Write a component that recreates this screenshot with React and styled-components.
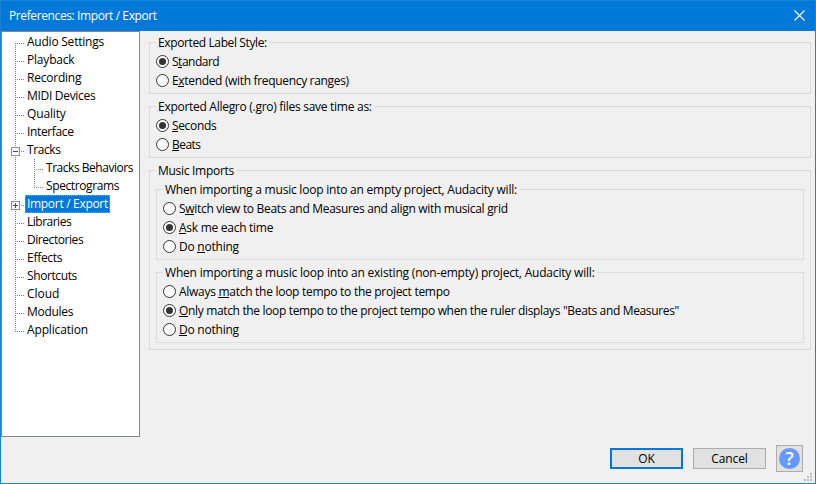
import React from 'react';
import styled, { createGlobalStyle } from 'styled-components';

const GlobalStyle = createGlobalStyle`
  *, *::before, *::after { box-sizing: border-box; }
  body { margin: 0; overflow: hidden; }
`;

const Dialog = styled.div`
  display: flex;
  flex-direction: column;
  width: 816px;
  height: 484px;
  border: 1px solid #1883d7;
  background: #f0f0f0;
  color: #000;
  font: 12px/18px 'Open Sans', 'Noto Sans', sans-serif;
  user-select: none;
`;

const TitleBar = styled.header`
  display: flex;
  align-items: center;
  justify-content: space-between;
  flex: none;
  height: 30px;
  padding: 0 10px 0 8px;
  background: #0078d7;
  color: #fff;
`;

const CloseIcon = styled.svg`
  width: 11px;
  height: 11px;
  margin-bottom: 1px;
`;

const Text = styled.span`
  white-space: nowrap;
  letter-spacing: ${(p) => p.$track || 0}px;
`;

const Body = styled.main`
  display: flex;
  flex: none;
  height: 406px;
`;

const Tree = styled.ul`
  flex: none;
  width: 139px;
  margin: 0;
  padding: 1px 0 0 9px;
  border: 1px solid #828790;
  background: #fff;
  list-style: none;
`;

const TreeRow = styled.li`
  display: flex;
  align-items: center;
  height: 18px;
`;

const Connector = styled.svg`
  flex: none;
  width: ${(p) => p.width}px;
  height: 18px;
  shape-rendering: crispEdges;
`;

const TreeLabel = styled.span`
  display: flex;
  align-items: center;
  height: 18px;
  padding: 0 2px;
  ${(p) => p.$selected && `
    padding: 0 1px;
    border: 1px dotted #ff8728;
    background: #0078d7;
    color: #fff;
  `}
`;

const Panel = styled.section`
  display: flex;
  flex-direction: column;
  flex: 1;
  padding: 4px 4px 0 9px;
`;

const Group = styled.section`
  display: flex;
  flex-direction: column;
  height: ${(p) => p.$height}px;
  margin-bottom: ${(p) => p.$gap || 0}px;
`;

const GroupHead = styled.div`
  display: flex;
  align-items: flex-start;
  flex: none;
  height: 16px;

  &::before,
  &::after {
    content: '';
    height: 9px;
    margin-top: 7px;
    border: 0 solid #dcdcdc;
    border-top-width: 1px;
  }
  &::before { width: 7px; border-left-width: 1px; }
  &::after { flex: 1; border-right-width: 1px; }
`;

const GroupTitle = styled.h2`
  margin: 0;
  padding: 0 2px;
  font: inherit;
  line-height: 16px;
`;

const GroupBody = styled.div`
  flex: 1;
  padding: ${(p) => (p.$nested ? '3px 6px 0' : '1px 6px 0')};
  border: 1px solid #dcdcdc;
  border-top: 0;
`;

const Option = styled.label`
  display: flex;
  align-items: center;
  gap: 3px;
  height: 19px;
  line-height: 19px;
`;

const RadioMark = styled.svg`
  flex: none;
  width: 13px;
  height: 13px;
`;

const Key = styled.span`
  display: inline-block;
  height: 13px;
  line-height: 14px;
  box-shadow: inset 0 -1px 0 #000;
`;

const Footer = styled.footer`
  display: flex;
  position: relative;
  flex: 1;
  align-items: flex-start;
  justify-content: flex-end;
  gap: 10px;
  padding: 8px 12px 0 0;
`;

const PushButton = styled.button`
  display: flex;
  align-items: center;
  justify-content: center;
  width: 73px;
  height: 21px;
  margin-top: 3px;
  padding: 1px 0 0;
  border: ${(p) => (p.$primary ? '2px solid #0078d7' : '1px solid #adadad')};
  background: #e1e1e1;
  color: #000;
  font: inherit;
`;

const HelpButton = styled(PushButton)`
  width: 27px;
  height: 27px;
  margin-top: 0;
  padding: 0;
`;

const HelpDisc = styled.span`
  display: flex;
  align-items: center;
  justify-content: center;
  width: 21px;
  height: 21px;
  border-radius: 50%;
  background: #69f;
  color: #fff;
  font: 600 18px/21px 'Open Sans', sans-serif;
`;

const SizeGrip = styled.svg`
  position: absolute;
  right: 3px;
  bottom: 2px;
  width: 8px;
  height: 8px;
  shape-rendering: crispEdges;
`;

const TREE = [
  { text: 'Audio Settings', track: -0.23, first: true },
  { text: 'Playback', track: -0.2 },
  { text: 'Recording', track: -0.22 },
  { text: 'MIDI Devices', track: -0.3 },
  { text: 'Quality', track: -0.15 },
  { text: 'Interface', track: -0.36 },
  { text: 'Tracks', track: -0.4, box: 'minus' },
  { text: 'Tracks Behaviors', track: -0.47, child: true },
  { text: 'Spectrograms', track: -0.39, child: true, lastChild: true },
  { text: 'Import / Export', track: -0.31, box: 'plus', selected: true },
  { text: 'Libraries', track: -0.5 },
  { text: 'Directories', track: -0.44 },
  { text: 'Effects', track: -0.28 },
  { text: 'Shortcuts', track: -0.4 },
  { text: 'Cloud', track: -0.05 },
  { text: 'Modules', track: -0.3 },
  { text: 'Application', track: -0.15, last: true },
];

function TreeLines({ item }) {
  const dots = { stroke: '#808080', strokeDasharray: '1 1' };
  const start = item.first ? 10 : 0;
  const end = item.last ? 11 : 18;
  return (
    <Connector width={item.child ? 33 : 14} viewBox={`0 0 ${item.child ? 33 : 14} 18`}>
      <path d={`M4.5 ${start}V${end}`} {...dots} />
      {item.child ? (
        <>
          <path d={`M23.5 0V${item.lastChild ? 11 : 18}`} {...dots} />
          <path d="M23 10.5H32" {...dots} />
        </>
      ) : (
        <path d="M4 10.5H13" {...dots} />
      )}
      {item.box && (
        <>
          <rect x="0.5" y="6.5" width="8" height="8" fill="#fafafa" stroke="#919191" />
          <path d="M2 10.5H7" stroke="#3b4f81" />
          {item.box === 'plus' && <path d="M4.5 8V13" stroke="#3b4f81" />}
        </>
      )}
    </Connector>
  );
}

function Radio({ text, hot = 0, track, checked }) {
  return (
    <Option>
      <RadioMark viewBox="0 0 13 13">
        <circle cx="6.5" cy="6.5" r="6" fill="#fff" stroke="#333" />
        {checked && <circle cx="6.5" cy="6.5" r="3.5" fill="#333" />}
      </RadioMark>
      <Text $track={track}>
        {text.slice(0, hot)}
        <Key>{text[hot]}</Key>
        {text.slice(hot + 1)}
      </Text>
    </Option>
  );
}

function GroupBox({ title, track, height, gap, nested, children }) {
  return (
    <Group $height={height} $gap={gap}>
      <GroupHead>
        <GroupTitle><Text $track={track}>{title}</Text></GroupTitle>
      </GroupHead>
      <GroupBody $nested={nested}>{children}</GroupBody>
    </Group>
  );
}

export default function App() {
  return (
    <>
      <GlobalStyle />
      <Dialog>
        <TitleBar>
          <Text $track={-0.39}>Preferences: Import / Export</Text>
          <CloseIcon viewBox="0 0 11 11">
            <path d="M.5 .5L10.5 10.5M10.5 .5L.5 10.5" stroke="#fff" strokeWidth="1.1" />
          </CloseIcon>
        </TitleBar>
        <Body>
          <Tree>
            {TREE.map((item) => (
              <TreeRow key={item.text}>
                <TreeLines item={item} />
                <TreeLabel $selected={item.selected}>
                  <Text $track={item.track}>{item.text}</Text>
                </TreeLabel>
              </TreeRow>
            ))}
          </Tree>
          <Panel>
            <GroupBox title="Exported Label Style:" track={-0.38} height={59} gap={5}>
              <Radio text="Standard" hot={1} track={-0.5} checked />
              <Radio text="Extended (with frequency ranges)" hot={1} track={-0.33} />
            </GroupBox>
            <GroupBox title="Exported Allegro (.gro) files save time as:" track={-0.28} height={59} gap={5}>
              <Radio text="Seconds" track={-0.35} checked />
              <Radio text="Beats" track={-0.55} />
            </GroupBox>
            <GroupBox title="Music Imports" track={-0.29} height={187} nested>
              <GroupBox
                title="When importing a music loop into an empty project, Audacity will:"
                track={-0.22}
                height={78}
                gap={5}
              >
                <Radio text="Switch view to Beats and Measures and align with musical grid" hot={1} track={-0.31} />
                <Radio text="Ask me each time" track={-0.27} checked />
                <Radio text="Do nothing" hot={3} track={-0.23} />
              </GroupBox>
              <GroupBox
                title="When importing a music loop into an existing (non-empty) project, Audacity will:"
                track={-0.195}
                height={78}
              >
                <Radio text="Always match the loop tempo to the project tempo" hot={7} track={-0.28} />
                <Radio
                  text={'Only match the loop tempo to the project tempo when the ruler displays "Beats and Measures"'}
                  track={-0.34}
                  checked
                />
                <Radio text="Do nothing" track={-0.23} />
              </GroupBox>
            </GroupBox>
          </Panel>
        </Body>
        <Footer>
          <PushButton $primary><Text>OK</Text></PushButton>
          <PushButton><Text $track={-0.1}>Cancel</Text></PushButton>
          <HelpButton aria-label="Help"><HelpDisc>?</HelpDisc></HelpButton>
          <SizeGrip viewBox="0 0 8 8" fill="#bfbfbf">
            <path d="M6 0h2v2h-2zM3 3h2v2h-2zM6 3h2v2h-2zM0 6h2v2h-2zM3 6h2v2h-2zM6 6h2v2h-2z" />
          </SizeGrip>
        </Footer>
      </Dialog>
    </>
  );
}
